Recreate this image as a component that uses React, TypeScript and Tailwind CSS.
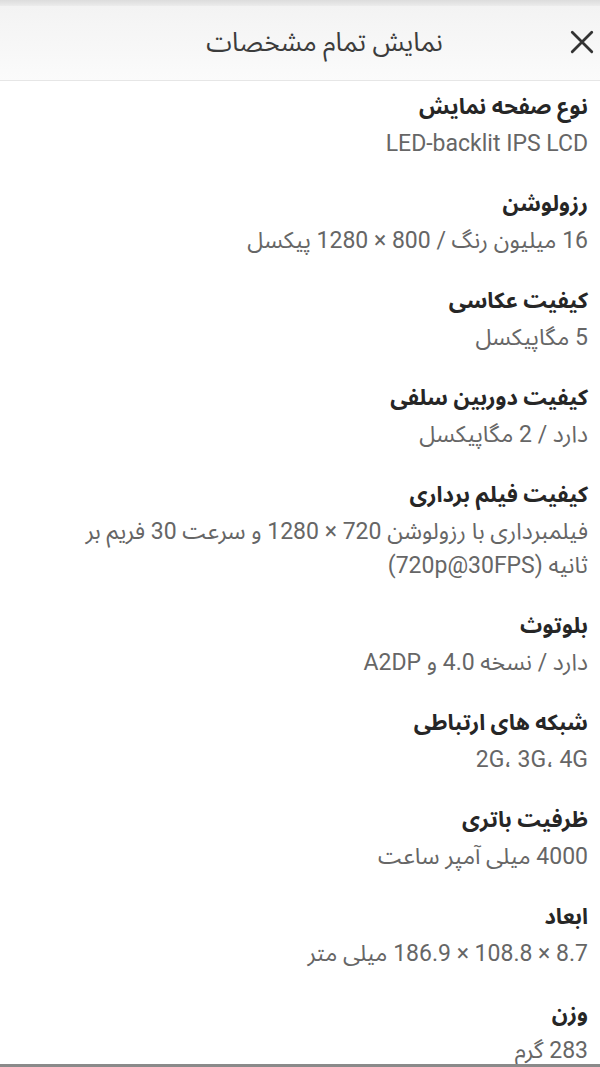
const specs: { label: string; value: string }[] = [
  { label: "نوع صفحه نمایش", value: "LED-backlit IPS LCD" },
  { label: "رزولوشن", value: "16 میلیون رنگ / 800 × 1280 پیکسل" },
  { label: "کیفیت عکاسی", value: "5 مگاپیکسل" },
  { label: "کیفیت دوربین سلفی", value: "دارد / 2 مگاپیکسل" },
  {
    label: "کیفیت فیلم برداری",
    value: "فیلمبرداری با رزولوشن 720 × 1280 و سرعت 30 فریم بر ثانیه (720p@30FPS)",
  },
  { label: "بلوتوث", value: "دارد / نسخه 4.0 و A2DP" },
  { label: "شبکه های ارتباطی", value: "2G، 3G، 4G" },
  { label: "ظرفیت باتری", value: "4000 میلی آمپر ساعت" },
  { label: "ابعاد", value: "8.7 × 108.8 × 186.9 میلی متر" },
  { label: "وزن", value: "283 گرم" },
];

export default function App() {
  return (
    <div
      className="w-[600px] h-[1067px] overflow-hidden bg-white relative"
      style={{ fontFamily: 'Roboto, "Noto Sans Arabic", "DejaVu Sans", sans-serif' }}
    >
      <div className="h-[6px] bg-gradient-to-b from-[#dcdcdc] to-[#ececec]" />
      <div className="h-[75px] bg-gradient-to-b from-[#f3f3f3] to-[#fbfbfb] border-b border-[#e6e6e6] flex items-center pl-[80px] pr-[5px]">
        <div dir="rtl" className="flex-1 text-center text-[26px] text-[#3c3c3c] pb-[2px]">
          نمایش تمام مشخصات
        </div>
        <svg width="26" height="26" viewBox="0 0 24 24" className="mb-[2px]">
          <path d="M3 3 L21 21 M21 3 L3 21" stroke="#333" strokeWidth="2.6" strokeLinecap="round" />
        </svg>
      </div>
      <div dir="rtl" className="pr-[12px] pl-[52px] pt-[8px] flex flex-col">
        {specs.map((s) => (
          <div key={s.label} className="mb-[25px]">
            <div className="text-[22px] font-bold text-[#262626] leading-[36px]">{s.label}</div>
            <div className="text-[23px] text-[#666] leading-[34px] mt-[2px]">{s.value}</div>
          </div>
        ))}
      </div>
      <div className="absolute left-0 right-0 bottom-0 h-[3px] bg-[#8a8a8a]" />
    </div>
  );
}
